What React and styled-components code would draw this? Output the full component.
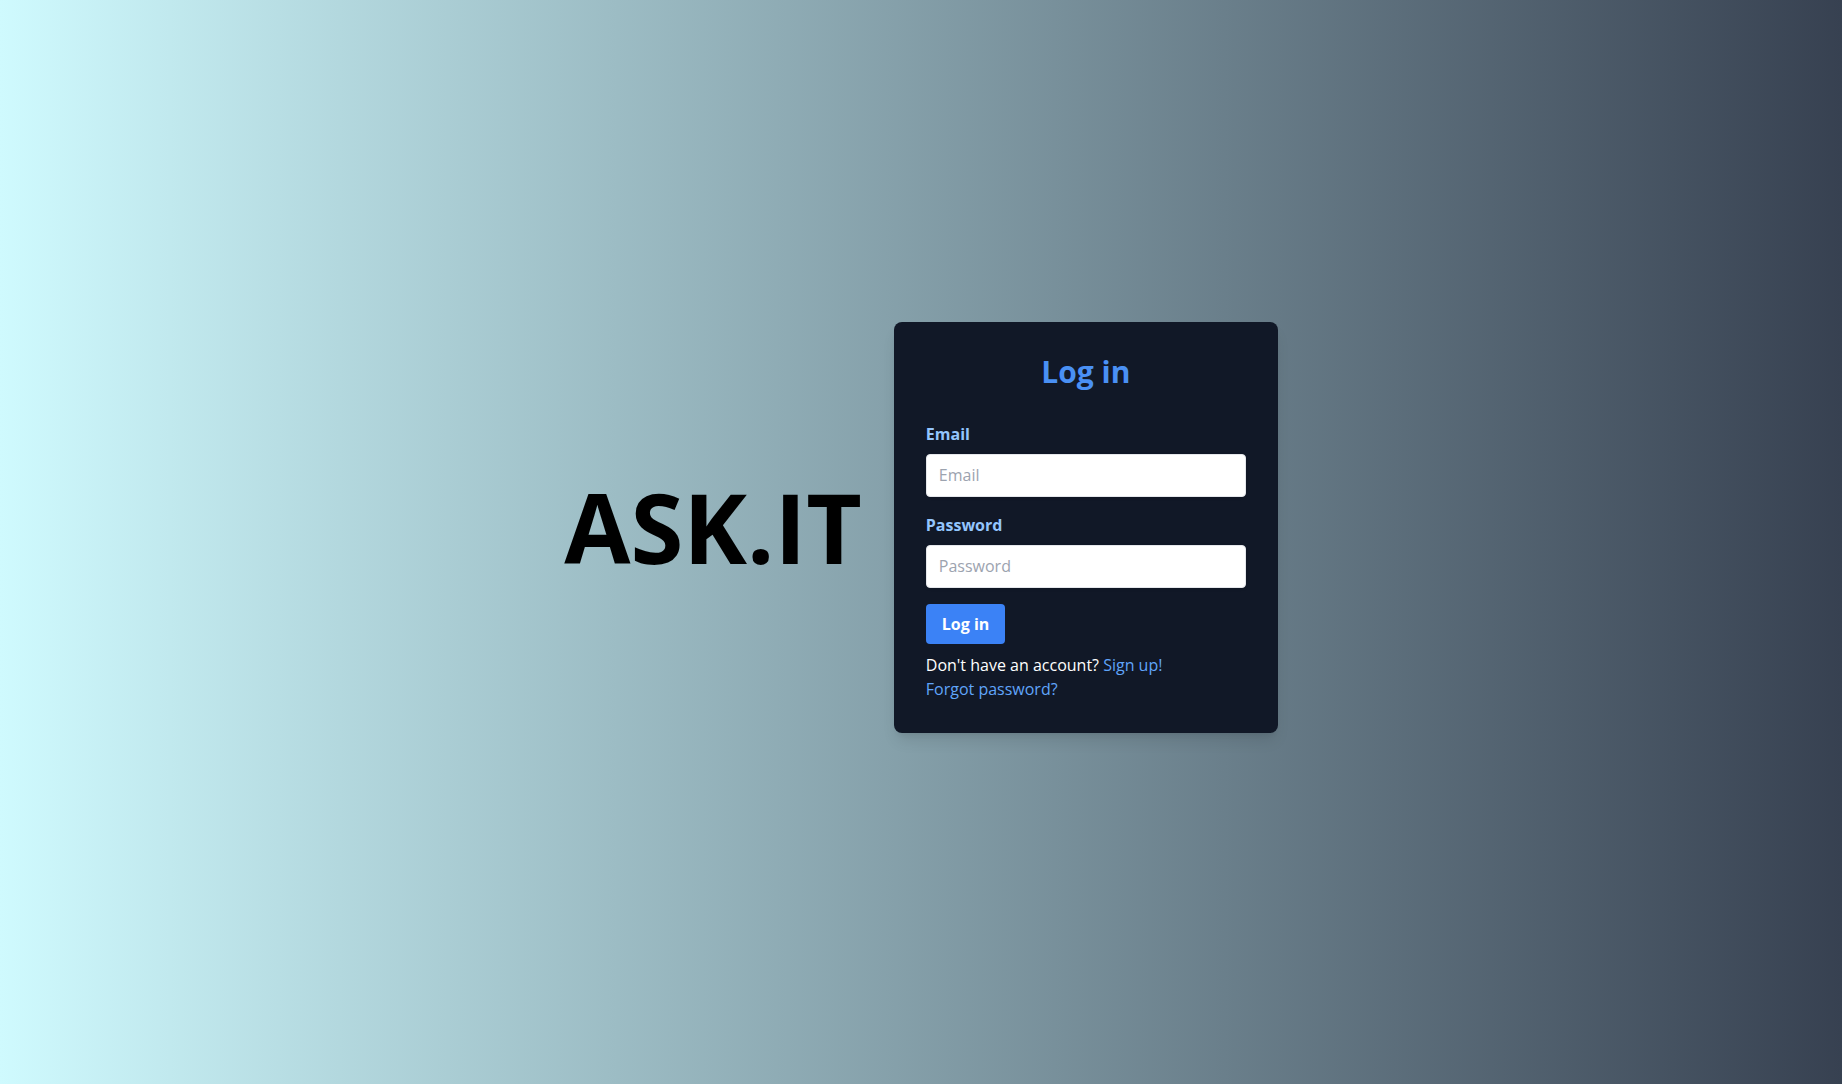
import React from 'react'
import styled, { createGlobalStyle } from 'styled-components'

const GlobalStyle = createGlobalStyle`
  html, body {
    margin: 0;
    padding: 0;
  }
  body {
    font-family: "Open Sans", "Noto Sans", sans-serif;
  }
  * {
    box-sizing: border-box;
  }
`

function LoginCard() {
  return (
    <Card>
      <Title>Log in</Title>
      <form onSubmit={e => e.preventDefault()}>
        <Label htmlFor="email">Email</Label>
        <Input id="email" type="email" placeholder="Email" />
        <Label htmlFor="password">Password</Label>
        <Input id="password" type="password" placeholder="Password" />
        <Button type="submit">Log in</Button>
      </form>
      <Footer>
        <p>
          Don't have an account? <Link href="#">Sign up!</Link>
        </p>
        <p>
          <Link href="#">Forgot password?</Link>
        </p>
      </Footer>
    </Card>
  )
}

export default function App() {
  return (
    <Page>
      <GlobalStyle />
      <Brand>ASK.IT</Brand>
      <LoginCard />
    </Page>
  )
}

const Page = styled.div`
  width: 100vw;
  height: 100vh;
  background-image: linear-gradient(to right, #cffafe, #374151);
  display: flex;
  justify-content: center;           // horizontal
  align-items: center;               // vertical
  gap: 32px;
  padding-bottom: 30px;
`

const Brand = styled.h1`
  margin: 0;
  font-size: 96px;
  line-height: 1;
  font-weight: 700;
  color: #000;
`

const Card = styled.div`
  width: 384px;
  padding: 32px;
  background-color: #111827;
  border-radius: 8px;
  box-shadow: 0 10px 15px -3px rgba(0, 0, 0, 0.1), 0 4px 6px -4px rgba(0, 0, 0, 0.1);
`

const Title = styled.h2`
  margin: 0 0 32px;
  text-align: center;
  font-size: 30px;
  line-height: 36px;
  font-weight: 700;
  color: #4a90f4;
`

const Label = styled.label`
  display: block;
  margin-bottom: 8px;
  font-size: 16px;
  line-height: 24px;
  font-weight: 700;
  color: #93c5fd;
`

const Input = styled.input`
  display: block;
  width: 100%;
  height: 43px;
  margin-bottom: 16px;
  padding: 8px 12px;
  font-family: inherit;
  font-size: 16px;
  line-height: 24px;
  color: #374151;
  background: #fff;
  border: 1px solid #e5e7eb;
  border-radius: 4px;
  box-shadow: 0 1px 3px rgba(0, 0, 0, 0.1);
  outline: none;
  &::placeholder {
    color: #9ca3af;
  }
`

const Button = styled.button`
  display: block;
  padding: 8px 16px;
  font-family: inherit;
  font-size: 16px;
  line-height: 24px;
  font-weight: 700;
  color: #fff;
  background-color: #3b82f6;
  border: none;
  border-radius: 4px;
  cursor: pointer;
`

const Footer = styled.div`
  margin-top: 9px;
  color: #fff;
  font-size: 16px;
  line-height: 24px;
  p {
    margin: 0;
  }
`

const Link = styled.a`
  color: #60a5fa;
  text-decoration: none;
`
